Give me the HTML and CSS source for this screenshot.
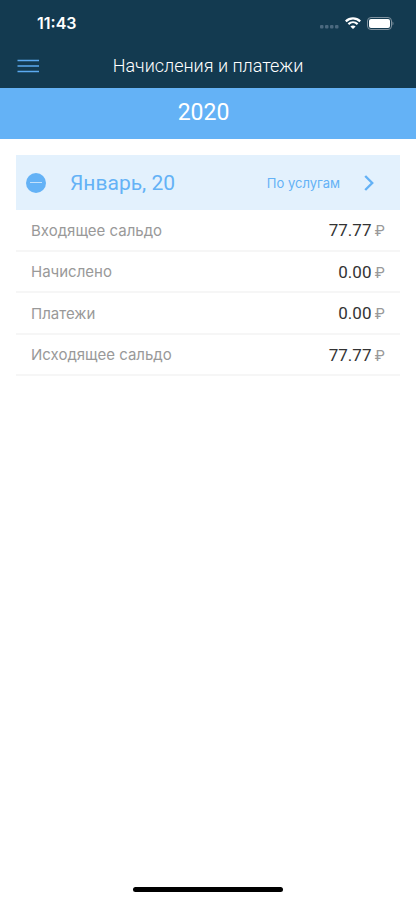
FILE: index.html
```html
<!DOCTYPE html>
<html lang="ru">
<head>
<meta charset="utf-8">
<meta name="viewport" content="width=device-width, initial-scale=1">
<title>Начисления и платежи</title>
<link rel="stylesheet" href="styles.css">
</head>
<body>
<header class="top">
  <div class="status">
    <time class="clock">11:43</time>
    <div class="indicators">
      <svg class="signal" width="20" height="14" viewBox="0 0 20 14" aria-hidden="true">
        <g fill="#4b697f"><rect x="1" y="9" width="3.500" height="3.500" rx="1"/><rect x="6" y="9" width="3.500" height="3.500" rx="1"/><rect x="11" y="9" width="3.500" height="3.500" rx="1"/><rect x="16" y="9" width="3.500" height="3.500" rx="1"/></g>
      </svg>
      <svg width="16" height="12" viewBox="0 0 16 12" aria-hidden="true">
        <g fill="none" stroke="#fff" stroke-width="2.2"><path d="M.8 4.4C4.9.4 11.1.4 15.2 4.4"/><path d="M3.4 7.1c2.7-2.5 6.500-2.500 9.200 0"/></g>
        <path d="M8 12 5.400 9.400c1.500-1.300 3.700-1.300 5.200 0z" fill="#fff"/>
      </svg>
      <svg width="27" height="13" viewBox="0 0 27 13" aria-hidden="true">
        <rect x=".5" y=".5" width="24" height="12" rx="3.500" fill="none" stroke="#7f929f"/>
        <rect x="2" y="2" width="21" height="9" rx="2" fill="#fff"/>
        <path d="M25.500 4.500c1.300.5 1.300 3.500 0 4z" fill="#7f929f"/>
      </svg>
    </div>
  </div>
  <div class="nav">
    <button class="menu" type="button" aria-label="Меню">
      <svg width="22" height="14" viewBox="0 0 22 14" aria-hidden="true"><path d="M.5 1.500h21.500M.5 7h21.500M.5 12.500h21.500" stroke="#5caaf0" stroke-width="1.700"/></svg>
    </button>
    <h1 class="title">Начисления и платежи</h1>
  </div>
</header>
<div class="year">2020</div>
<main class="content">
  <section>
    <div class="month">
      <button class="collapse" type="button" aria-label="Свернуть">
        <svg width="20" height="20" viewBox="0 0 20 20" aria-hidden="true"><circle cx="10" cy="10" r="10" fill="#64b2f6"/><path d="M4 9.500h12" stroke="#c4e1fb"/></svg>
      </button>
      <h2 class="month-name">Январь, 20</h2>
      <a class="services" href="#services">По услугам
        <svg width="10" height="16" viewBox="0 0 10 16" aria-hidden="true"><path d="M1.200 1 8.200 8l-7 7" fill="none" stroke="#64b2f6" stroke-width="2.400"/></svg>
      </a>
    </div>
    <table class="totals">
      <tr><th scope="row">Входящее сальдо</th><td>77.77<span class="currency">₽</span></td></tr>
      <tr><th scope="row">Начислено</th><td>0.00<span class="currency">₽</span></td></tr>
      <tr><th scope="row">Платежи</th><td>0.00<span class="currency">₽</span></td></tr>
      <tr><th scope="row">Исходящее сальдо</th><td>77.77<span class="currency">₽</span></td></tr>
    </table>
  </section>
</main>
<footer class="home"><div class="home-bar"></div></footer>
</body>
</html>
```
FILE: styles.css
```css
* { box-sizing: border-box; }
body {
  margin: 0;
  min-height: 100vh;
  display: flex;
  flex-direction: column;
  background: #fff;
  font-family: Inter, "Liberation Sans", sans-serif;
}
button {
  display: flex;
  padding: 0;
  border: 0;
  background: none;
}
h1, h2 { margin: 0; font-weight: 400; }
.top { background: #133a50; color: #fff; }
.status {
  display: flex;
  justify-content: space-between;
  align-items: center;
  height: 44px;
  padding: 2px 22px 0 37px;
}
.clock { font-size: 16px; font-weight: 600; }
.indicators { display: flex; align-items: center; gap: 6px; }
.nav {
  display: grid;
  grid-template-columns: 40px 1fr 40px;
  align-items: center;
  height: 44px;
}
.menu { padding-left: 17px; }
.title {
  text-align: center;
  font: 300 18px/24px Roboto, sans-serif;
}
.year {
  height: 51px;
  padding-right: 9px;
  background: #64b2f6;
  color: #fff;
  text-align: center;
  font: 400 23px/49px Roboto, sans-serif;
}
.content { flex: 1; padding: 16px; }
.month {
  display: flex;
  align-items: center;
  height: 55px;
  padding: 0 26px 0 10px;
  background: #e3f1fd;
  color: #64b2f6;
}
.month-name {
  flex: 1;
  padding-left: 24px;
  font: 400 21px/28px Roboto, sans-serif;
}
.services {
  display: flex;
  align-items: center;
  gap: 24px;
  color: inherit;
  font-size: 13px;
  text-decoration: none;
}
.totals {
  width: 100%;
  height: 166px;
  border-spacing: 0;
}
.totals th, .totals td {
  padding: 2px 15px 0;
  border-bottom: 2px solid #f6f6f6;
  line-height: 24px;
}
.totals th {
  color: #999;
  font-size: 15px;
  font-weight: 400;
  text-align: left;
}
.totals td {
  color: #333;
  font-family: Roboto, sans-serif;
  font-size: 17px;
  text-align: right;
}
.currency {
  margin-left: 3px;
  color: #999;
  font-family: Inter, sans-serif;
  font-size: 15px;
}
.home {
  display: flex;
  justify-content: center;
  padding-bottom: 8px;
}
.home-bar {
  width: 36%;
  height: 5px;
  border-radius: 3px;
  background: #000;
}
```
